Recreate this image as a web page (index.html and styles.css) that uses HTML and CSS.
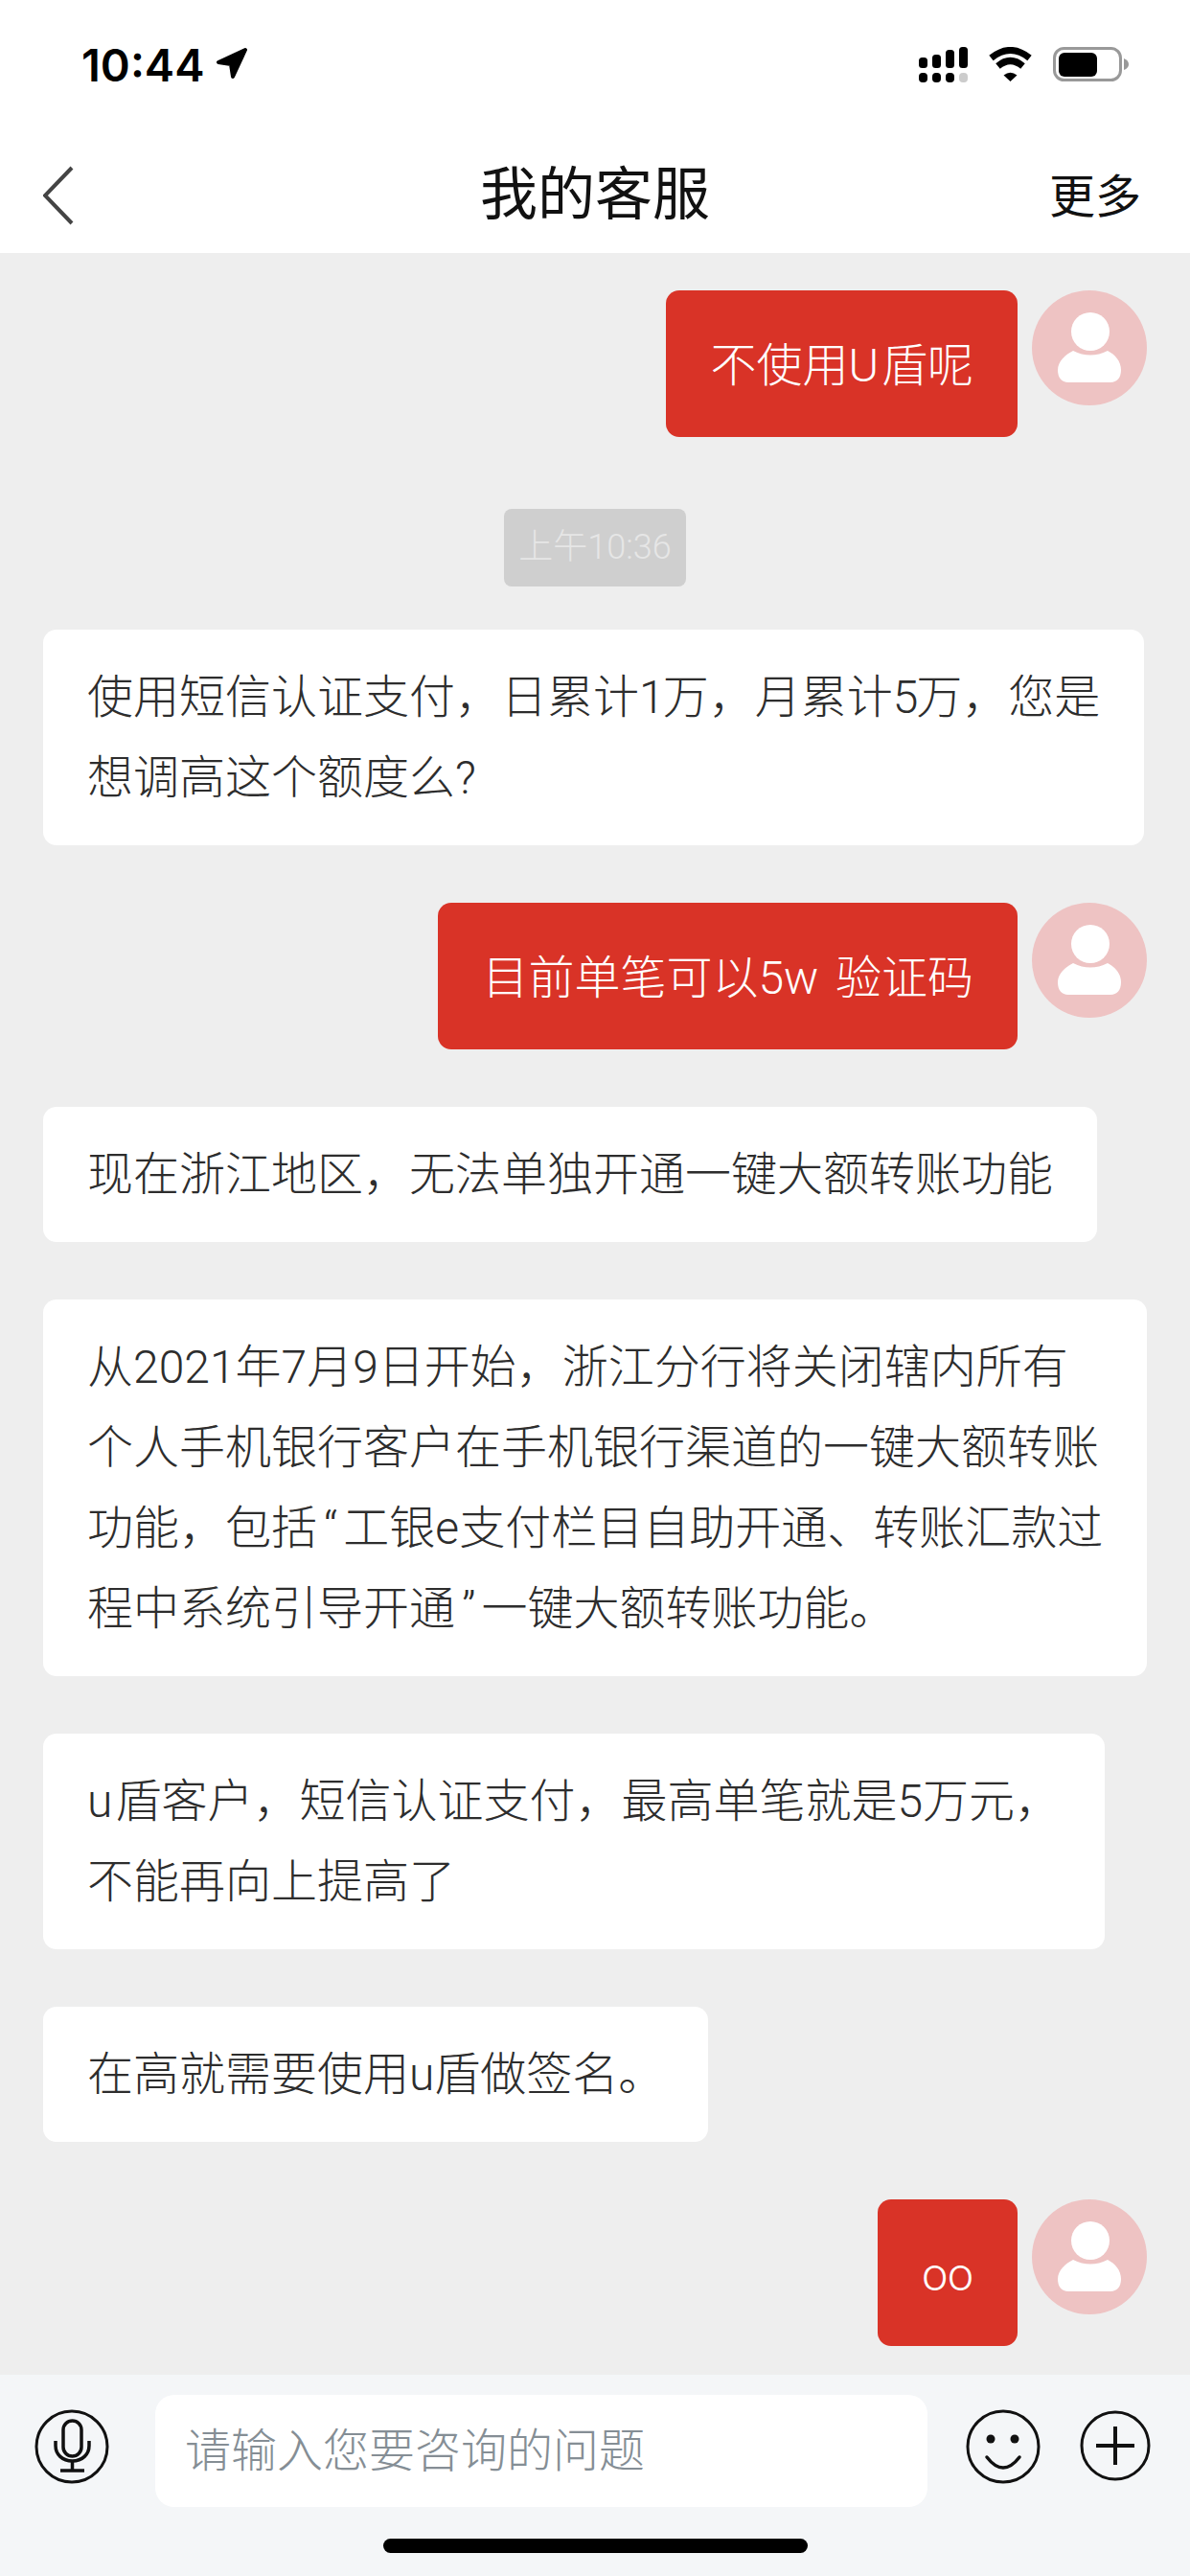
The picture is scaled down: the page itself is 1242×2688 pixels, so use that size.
FILE: index.html
```html
<!DOCTYPE html>
<html lang="zh-CN">
<head>
  <meta charset="UTF-8">
  <title>我的客服</title>
  <link rel="stylesheet" href="styles.css">
</head>
<body>
  <div class="page">

    <header class="top">
      <div class="status">
        <div class="clock">
          <span>10:44</span>
          <svg class="arrow" width="34" height="34" viewBox="0 0 34 34"><path d="M31 3 L3 16 L16 18 L18 31 Z" fill="#000" stroke="#000" stroke-width="4" stroke-linejoin="round"/></svg>
        </div>
        <div class="status-icons">
          <svg width="51" height="37" viewBox="0 0 51 37">
            <rect x="0" y="11" width="9" height="11" rx="3.5"/>
            <rect x="14" y="8" width="9" height="14" rx="3.5"/>
            <rect x="28" y="3" width="9" height="19" rx="3.5"/>
            <rect x="42" y="0" width="9" height="22" rx="3.5"/>
            <rect x="0" y="27" width="9" height="10" rx="4"/>
            <rect x="14" y="27" width="9" height="10" rx="4"/>
            <rect x="28" y="27" width="9" height="10" rx="4"/>
            <rect x="42" y="27" width="9" height="10" rx="4" fill="#ccc"/>
          </svg>
          <svg width="47" height="36" viewBox="0 0 47 36">
            <path d="M3.500 11.500 Q23.500 -4.500 43.500 11.500" fill="none" stroke="#000" stroke-width="7"/>
            <path d="M10.500 20 Q23.500 9 36.500 20" fill="none" stroke="#000" stroke-width="7"/>
            <path d="M23.500 36 L16.500 29.500 Q23.500 24 30.500 29.500 Z"/>
          </svg>
          <svg class="battery" width="79" height="36" viewBox="0 0 79 36">
            <rect x="1.500" y="1.500" width="69" height="33" rx="10" fill="none" stroke="#999" stroke-width="3"/>
            <rect x="6" y="6" width="40" height="25" rx="6"/>
            <path d="M74 12 Q79 14 79 18 Q79 22 74 24 Z" fill="#999"/>
          </svg>
        </div>
      </div>
      <nav class="nav">
        <svg class="back" width="32" height="62" viewBox="0 0 32 62"><path d="M30 2 L2 31 L30 60" fill="none" stroke="#444" stroke-width="4"/></svg>
        <h1 class="title">我的客服</h1>
        <span class="more">更多</span>
      </nav>
    </header>

    <main class="chat">
      <div class="row row-out">
        <div class="bubble bubble-out">不使用<span class="wide">U</span>盾呢</div>
        <svg class="avatar" width="120" height="120" viewBox="0 0 120 120">
          <circle cx="60" cy="60" r="60" fill="#eec3c3"/>
          <circle cx="61" cy="43" r="20" fill="#fff"/>
          <path d="M43 63 Q61 72 79 63 C87 67 93 74 93 83 C93 91 89 96 82 96 L38 96 C31 96 27 91 27 83 C27 74 35 67 43 63 Z" fill="#fff"/>
        </svg>
      </div>

      <div class="time"><span>上午10:36</span></div>

      <div class="row row-in row-first">
        <div class="bubble">使用短信认证支付，日累计<span class="tight">1</span>万，月累计<span class="tight">5</span>万，您是<br>想调高这个额度么?</div>
      </div>

      <div class="row row-out">
        <div class="bubble bubble-out">目前单笔可以5w 验证码</div>
        <svg class="avatar" width="120" height="120" viewBox="0 0 120 120">
          <circle cx="60" cy="60" r="60" fill="#eec3c3"/>
          <circle cx="61" cy="43" r="20" fill="#fff"/>
          <path d="M43 63 Q61 72 79 63 C87 67 93 74 93 83 C93 91 89 96 82 96 L38 96 C31 96 27 91 27 83 C27 74 35 67 43 63 Z" fill="#fff"/>
        </svg>
      </div>

      <div class="row row-in">
        <div class="bubble">现在浙江地区，无法单独开通一键大额转账功能</div>
      </div>

      <div class="row row-in">
        <div class="bubble">从2021年7月9日开始，浙江分行将关闭辖内所有<br>个人手机银行客户在手机银行渠道的一键大额转账<br>功能，包括<span class="quote">“</span>工银e支付栏目自助开通、转账汇款过<br>程中系统引导开通<span class="quote">”</span>一键大额转账功能。</div>
      </div>

      <div class="row row-in">
        <div class="bubble"><span class="wide">u</span>盾客户，短信认证支付，最高单笔就是5万元，<br>不能再向上提高了</div>
      </div>

      <div class="row row-in">
        <div class="bubble">在高就需要使用u盾做签名。</div>
      </div>

      <div class="row row-out">
        <div class="bubble bubble-out">oo</div>
        <svg class="avatar" width="120" height="120" viewBox="0 0 120 120">
          <circle cx="60" cy="60" r="60" fill="#eec3c3"/>
          <circle cx="61" cy="43" r="20" fill="#fff"/>
          <path d="M43 63 Q61 72 79 63 C87 67 93 74 93 83 C93 91 89 96 82 96 L38 96 C31 96 27 91 27 83 C27 74 35 67 43 63 Z" fill="#fff"/>
        </svg>
      </div>
    </main>

    <footer class="bottom">
      <div class="composer">
        <svg class="tool" width="78" height="78" viewBox="0 0 78 78" fill="none" stroke="#111" stroke-width="3">
          <circle cx="39" cy="39" r="37"/>
          <rect x="30" y="12" width="19" height="37" rx="9.500" stroke-width="3.500"/>
          <path d="M22 33 V38 C22 47 29 54 39.500 54 C50 54 57 47 57 38 V33" stroke-width="3.500"/>
          <path d="M39.500 54 V64 M27 64 H52" stroke-width="3.500"/>
        </svg>
        <div class="field">请输入您要咨询的问题</div>
        <svg class="tool" width="78" height="78" viewBox="0 0 78 78" fill="none" stroke="#111" stroke-width="3">
          <circle cx="39" cy="39" r="37"/>
          <circle cx="26" cy="31" r="4.500" fill="#111" stroke="none"/>
          <circle cx="51" cy="31" r="4.500" fill="#111" stroke="none"/>
          <path d="M22 50 Q39 72 56 50" stroke-width="3.500" stroke-linecap="round"/>
        </svg>
        <svg class="tool tool-plus" width="74" height="74" viewBox="0 0 74 74" fill="none" stroke="#111" stroke-width="3">
          <circle cx="37" cy="37" r="35"/>
          <path d="M17 37 H57 M37 17 V57" stroke-width="4"/>
        </svg>
      </div>
      <div class="home-bar"></div>
    </footer>

  </div>
</body>
</html>
```

FILE: styles.css
```css
* {
  box-sizing: border-box;
}
body {
  margin: 0;
  background: #eee;
  font-family: Roboto, "Noto Sans CJK SC", sans-serif;
}
.page {
  width: 1242px;
  height: 2688px;
  display: flex;
  flex-direction: column;
  overflow: hidden;
}

/* status bar + nav */
.top {
  height: 264px;
  background: #fff;
  flex: none;
}
.status {
  display: flex;
  justify-content: space-between;
  padding: 49px 64px 0 85px;
  height: 154px;
}
.clock {
  display: flex;
  align-items: flex-start;
  font-family: Inter, sans-serif;
  font-weight: 600;
  font-size: 47px;
  line-height: 37px;
  color: #000;
}
.arrow {
  margin-left: 12px;
}
.status-icons {
  display: flex;
  align-items: flex-start;
  gap: 21px;
}
.nav {
  display: grid;
  grid-template-columns: 1fr auto 1fr;
  align-items: center;
  padding: 0 45px;
  height: 100px;
}
.title {
  margin: 0;
  font-size: 60px;
  font-weight: 400;
  line-height: 100px;
  color: #111;
}
.more {
  justify-self: end;
  margin: 0 6px 7px 0;
  font-size: 48px;
  color: #111;
}

/* messages */
.chat {
  flex: 1;
  padding: 39px 45px 0;
  background: #eee;
}
.row {
  display: flex;
  margin-top: 60px;
}
.row:first-child {
  margin-top: 0;
}
.row-first {
  margin-top: 45px;
}
.row-out {
  justify-content: flex-end;
  gap: 15px;
}
.bubble {
  background: #fff;
  color: #2d2d2d;
  font-size: 48px;
  font-weight: 300;
  line-height: 84px;
  white-space: nowrap;
  padding: 29px 46px 28px;
  border-radius: 14px;
}
.bubble-out {
  background: #d93327;
  color: #fff;
  padding: 37px 46px 32px;
  word-spacing: 6px;
}
.tight {
  letter-spacing: -2px;
}
.wide {
  letter-spacing: 3px;
}
.quote {
  margin: 0 6px 0 7px;
}
.avatar {
  flex: none;
}
.time {
  display: flex;
  justify-content: center;
  margin-top: 75px;
}
.time span {
  background: #cfcfcf;
  color: #e6e6e6;
  font-size: 36px;
  font-weight: 300;
  line-height: 81px;
  padding: 0 15px;
  border-radius: 8px;
}

/* input bar */
.bottom {
  height: 210px;
  flex: none;
  background: #f4f6f8;
  padding-top: 21px;
}
.composer {
  display: flex;
  align-items: flex-start;
  padding-left: 36px;
  height: 117px;
}
.tool {
  flex: none;
  margin-top: 15px;
}
.tool-plus {
  margin-top: 16px;
  margin-left: 41px;
}
.field {
  width: 806px;
  height: 117px;
  margin: 0 40px 0 48px;
  padding: 0 31px;
  background: #fff;
  border-radius: 20px;
  color: #858e95;
  font-size: 48px;
  font-weight: 300;
  line-height: 117px;
}
.home-bar {
  width: 443px;
  height: 15px;
  margin: 33px auto 0;
  background: #000;
  border-radius: 8px;
}
```
